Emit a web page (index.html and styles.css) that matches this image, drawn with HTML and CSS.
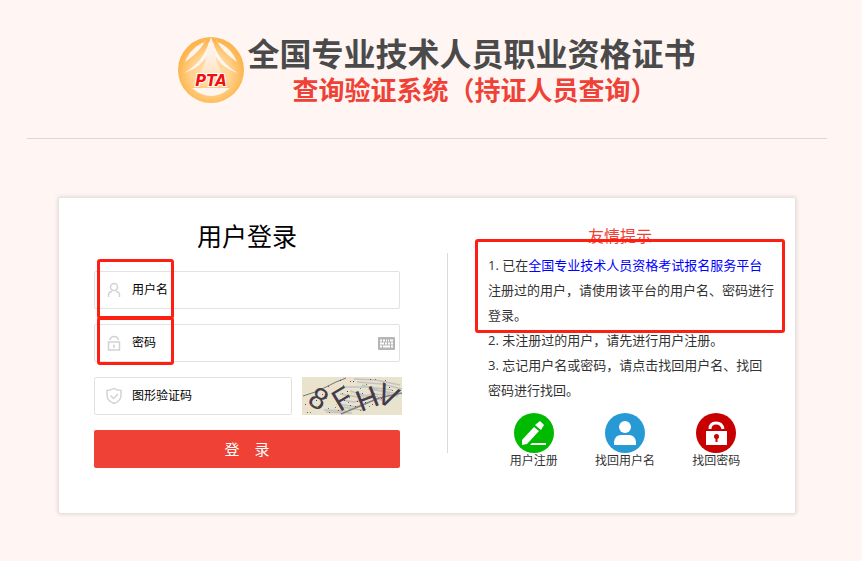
FILE: index.html
```html
<!DOCTYPE html>
<html lang="zh-CN">
<head>
  <meta charset="UTF-8">
  <meta name="viewport" content="width=device-width, initial-scale=1.0">
  <title>全国专业技术人员职业资格证书查询验证系统</title>
  <link rel="stylesheet" href="styles.css">
</head>
<body>
  <header class="header">
    <svg class="logo" viewBox="0 0 66 66" aria-hidden="true">
      <defs>
        <radialGradient id="gold" cx="50%" cy="55%" r="50%">
          <stop offset="0" stop-color="#ffe3b8"/>
          <stop offset="0.6" stop-color="#ffd28c"/>
          <stop offset="1" stop-color="#fdb54d"/>
        </radialGradient>
        <linearGradient id="peak" x1="0" y1="0" x2="0" y2="1">
          <stop offset="0" stop-color="#fff5f0"/>
          <stop offset="0.5" stop-color="#fff0e6"/>
          <stop offset="1" stop-color="#ffe3bd"/>
        </linearGradient>
      </defs>
      <circle cx="33" cy="33" r="33" fill="url(#gold)"/>
      <path d="M28 2C24 11 17 18 7 25C11 15 18 8 27 5Z" fill="#fff5f0"/>
      <path d="M38 2C42 11 49 18 59 25C55 15 48 8 39 5Z" fill="#fff5f0"/>
      <path d="M31 5C27 19 18 29 6 36C19 32 28 24 32 12Z" fill="#fff5f0"/>
      <path d="M35 5C39 19 48 29 60 36C47 32 38 24 34 12Z" fill="#fff5f0"/>
      <path d="M33 0L36 9C37 21 40 30 45 38H21C26 30 29 21 30 9Z" fill="url(#peak)"/>
      <path d="M14 51H52Q33 67 14 51Z" fill="#fff5f0"/>
      <path d="M14 50H52" stroke="#fdc36c"/>
      <text class="logo-text" x="33" y="49" text-anchor="middle">PTA</text>
    </svg>
    <div class="titles">
      <h1>全国专业技术人员职业资格证书</h1>
      <p class="subtitle">查询验证系统（持证人员查询）</p>
    </div>
  </header>

  <main class="card">
    <form class="login">
      <h2>用户登录</h2>
      <div class="field">
        <svg class="field-icon" viewBox="0 0 16 16" aria-hidden="true">
          <circle cx="8" cy="5" r="3.5"/>
          <path d="M2.500 15V13Q3 9.500 6 9.500M13.500 15V13Q13 9.500 10 9.500"/>
        </svg>
        <label for="username">用户名</label>
        <input type="text" id="username">
      </div>
      <div class="field">
        <svg class="field-icon" viewBox="0 0 16 16" aria-hidden="true">
          <path d="M2.500 7H13.500V15H2.500ZM4 5V4.500Q5 1.500 8 1.500Q11.500 1.500 12.500 5"/>
          <path d="M8 10V13M7 10.500H9"/>
        </svg>
        <label for="password">密码</label>
        <input type="password" id="password">
        <svg class="keyboard" viewBox="0 0 17 13" aria-hidden="true">
          <rect width="17" height="13" rx="1" fill="#b5b5b5"/>
          <path d="M2 3.500H4M5 3.500H7M8 3.500H9M10 3.500H11M12 3.500H15M2 6.500H6M7 6.500H9M10 6.500H12M13 6.500H15M2 9.500H4M5 9.500H12M13 9.500H15" stroke="#fff" stroke-width="2"/>
        </svg>
      </div>
      <div class="captcha-row">
        <div class="field">
          <svg class="field-icon" viewBox="0 0 16 16" aria-hidden="true">
            <path d="M8 0.500Q11 2.500 15 2.500V7Q15 13 8 15.500Q1 13 1 7V2.500Q5 2.500 8 0.500Z"/>
            <path d="M4.500 7.500L7.500 10.500L12 6"/>
          </svg>
          <label for="captcha">图形验证码</label>
          <input type="text" id="captcha">
        </div>
        <svg class="captcha" viewBox="0 0 100 38" role="img" aria-label="验证码">
          <rect width="100" height="38" fill="#e9e2cd"/>
          <g fill="none" stroke="#c2c2c2" stroke-width="1.500">
            <path d="M42 10H66L90 13M52 2L74 3L98 8M55 5L80 7L100 12M60 8L88 17M38 17L56 20L72 17L96 19M34 22L52 25L76 19M36 27L54 30L66 26M22 33L44 34L60 29M24 35L50 36M48 14L68 20L84 24M66 12L92 16M40 30L60 33"/>
          </g>
          <path d="M1 19L13 15L24 10L34 5L44 1" fill="none" stroke="#77776f"/>
          <path d="M39 37L58 29L77 21L100 16" fill="none" stroke="#85858a" stroke-width="1.500"/>
          <g class="captcha-text" text-anchor="middle">
            <text x="17" y="32" transform="rotate(30 17 21)">8</text>
            <text x="40" y="32" transform="rotate(-31 40 21)">F</text>
            <text x="65" y="32" transform="rotate(-21 65 21)">H</text>
            <text x="86" y="29" transform="rotate(24 86 18)">V</text>
          </g>
          <g fill="none">
            <path stroke="#d3282e" d="M5 35.500h1M20 17.500h1M27 35.500h1M48 4.500h1M53 29.500h1M83 3.500h1M72 16.500h1M36 33.500h1M9 27.500h1"/>
            <path stroke="#28a628" d="M8 35.500h1M15 30.500h1M41 8.500h1M73 2.500h1M64 7.500h1M40 16.500h1M58 33.500h1M90 13.500h1M24 21.500h1"/>
            <path stroke="#16a0ad" d="M13 18.500h1M46 25.500h1M47 20.500h1M58 11.500h1M26 31.500h1M54 17.500h1M67 29.500h1M33 30.500h1"/>
            <path stroke="#9f27b0" d="M26 9.500h1M48 28.500h1M42 23.500h1M60 16.500h1M68 2.500h1M79 21.500h1M3 27.500h1M70 27.500h1"/>
            <path stroke="#333b9b" d="M38 3.500h1M51 4.500h1M14 23.500h1M55 24.500h1M87 10.500h1M38 27.500h1M45 14.500h1M63 25.500h1"/>
            <path stroke="#e0d426" d="M44 33.500h2M34 27.500h1M49 16.500h1M61 20.500h1M97 7.500h1"/>
          </g>
        </svg>
      </div>
      <button type="submit" class="submit">登　录</button>
      <span class="mark mark-user"></span>
      <span class="mark mark-pass"></span>
    </form>

    <div class="divider"></div>

    <section class="tips">
      <h3>友情提示</h3>
      <ol class="tip-list">
        <li>1. 已在<a href="#platform">全国专业技术人员资格考试报名服务平台</a>注册过的用户，请使用该平台的用户名、密码进行登录。</li>
        <li>2. 未注册过的用户，请先进行用户注册。</li>
        <li>3. 忘记用户名或密码，请点击找回用户名、找回密码进行找回。</li>
      </ol>
      <nav class="actions">
        <a href="#register">
          <svg viewBox="0 0 40 40" aria-hidden="true">
            <circle cx="20" cy="20" r="20" fill="#00ba00"/>
            <path d="M8 32V27L20 14L25 18L13 31ZM21 12L26 8L30 12L27 17ZM16 32L18 30H32V32Z" fill="#fff"/>
          </svg>
          用户注册
        </a>
        <a href="#find-name">
          <svg viewBox="0 0 40 40" aria-hidden="true">
            <circle cx="20" cy="20" r="20" fill="#279ad6"/>
            <circle cx="20" cy="14" r="6" fill="#fff"/>
            <path d="M9 32V29Q10 22 16 22H24Q30 22 31 29V32Z" fill="#fff"/>
          </svg>
          找回用户名
        </a>
        <a href="#find-password">
          <svg viewBox="0 0 40 40" aria-hidden="true">
            <circle cx="20" cy="20" r="20" fill="#c80000"/>
            <path d="M14 16Q14 10 20 10Q26 10 27 16" fill="none" stroke="#fff" stroke-width="3"/>
            <path d="M10 18H31V32H10Z" fill="#fff"/>
            <circle cx="20.500" cy="23.500" r="2.500" fill="#c80000"/>
            <path d="M20.500 24V29" stroke="#c80000" stroke-width="2"/>
          </svg>
          找回密码
        </a>
      </nav>
      <span class="mark mark-tip"></span>
    </section>
  </main>
</body>
</html>
```
FILE: styles.css
```css
:root {
  --bg: #fff5f2;
  --red: #ef4136;
  --mark: #ff1e12;
  --line: #e2e2e2;
  --font: 'Open Sans', 'Noto Sans CJK SC', sans-serif;
}

* {
  box-sizing: border-box;
  margin: 0;
  padding: 0;
}

body {
  font-family: var(--font);
  font-size: 12px;
  color: #333;
  background: var(--bg);
  padding: 0 35px 40px 27px;
}

svg {
  display: block;
}

a {
  text-decoration: none;
}

.header {
  display: flex;
  justify-content: center;
  gap: 3px;
  max-width: 800px;
  margin: 0 auto 58px;
  padding: 36px 0 30px 20px;
  border-bottom: 1px solid #dcd6d4;
}

.logo {
  width: 66px;
  height: 66px;
  margin-top: 1px;
}

.logo-text {
  font: italic bold 15px 'DejaVu Sans', sans-serif;
  fill: #f01010;
  stroke: #fff;
  stroke-width: 2px;
  paint-order: stroke;
}

.titles {
  font-weight: 700;
  line-height: 36px;
  text-align: center;
}

h1 {
  font-size: 32px;
  color: #4a4a4a;
}

.subtitle {
  font-size: 26px;
  color: var(--red);
  padding-left: 6px;
}

.card {
  display: flex;
  align-items: flex-start;
  max-width: 738px;
  margin: 0 auto;
  padding: 21px 21px 44px 35px;
  background: #fff;
  border: 1px solid #e6e4e1;
  border-radius: 2px;
  box-shadow: 0 0 4px rgba(0, 0, 0, 0.15);
}

/* login form */
.login {
  position: relative;
  flex: 0 1 306px;
  min-width: 0;
}

h2 {
  font-size: 25px;
  font-weight: 400;
  line-height: 34px;
  color: #000;
  text-align: center;
  margin-bottom: 18px;
}

.field {
  display: flex;
  align-items: center;
  height: 38px;
  margin-bottom: 15px;
  padding: 0 4px 0 11px;
  border: 1px solid var(--line);
  border-radius: 2px;
}

.field label {
  flex: none;
  padding-bottom: 2px;
  color: #000;
}

.field input {
  flex: 1;
  min-width: 0;
  height: 36px;
  padding-left: 8px;
  border: 0;
  outline: 0;
  background: transparent;
}

.field-icon {
  flex: none;
  width: 16px;
  height: 16px;
  margin-right: 10px;
  fill: none;
  stroke: #d2d2d2;
  stroke-width: 1.5;
}

.keyboard {
  flex: none;
  width: 17px;
  height: 13px;
}

.captcha-row {
  display: flex;
  gap: 10px;
  margin-right: -2px;
}

.captcha-row .field {
  flex: 1;
  min-width: 0;
}

.captcha {
  flex: none;
  width: 100px;
  height: 38px;
  overflow: visible;
}

.captcha-text {
  font: 30px 'Liberation Sans', sans-serif;
  fill: #443c4a;
}

.submit {
  display: block;
  width: 100%;
  height: 38px;
  padding-bottom: 2px;
  border: 0;
  border-radius: 2px;
  background: var(--red);
  color: #fff;
  font: 15px var(--font);
}

.divider {
  flex: none;
  width: 1px;
  height: 200px;
  margin: 34px 40px 0 47px;
  background: #dadada;
}

/* tips */
.tips {
  position: relative;
  flex: 0 1 286px;
}

h3 {
  font-size: 16px;
  font-weight: 400;
  line-height: 34px;
  color: var(--red);
  text-align: center;
  margin-right: 22px;
}

.tip-list {
  list-style: none;
  font-size: 13px;
  line-height: 25px;
  margin-bottom: 10px;
}

.tip-list a {
  color: #00f;
}

.actions {
  display: flex;
  margin-right: 12px;
}

.actions a {
  flex: 1;
  color: #333;
  line-height: 16px;
  text-align: center;
}

.actions svg {
  width: 40px;
  height: 40px;
  margin: 0 auto;
}

/* red highlight frames */
.mark {
  position: absolute;
  border: 3px solid var(--mark);
  border-radius: 3px;
  pointer-events: none;
}

.mark-user {
  top: 40px;
  left: 3px;
  width: 77px;
  height: 60px;
}

.mark-pass {
  top: 98px;
  left: 3px;
  width: 77px;
  height: 48px;
}

.mark-tip {
  top: 20px;
  left: -13px;
  width: 310px;
  height: 94px;
}
```
